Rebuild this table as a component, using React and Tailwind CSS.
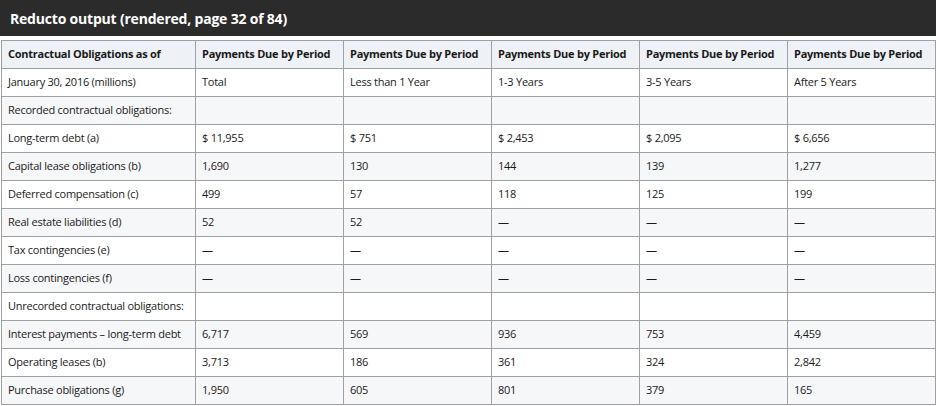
import React from 'react';

const head = [
  'Contractual Obligations as of',
  'Payments Due by Period',
  'Payments Due by Period',
  'Payments Due by Period',
  'Payments Due by Period',
  'Payments Due by Period',
];

const rows = [
  ['January 30, 2016 (millions)', 'Total', 'Less than 1 Year', '1-3 Years', '3-5 Years', 'After 5 Years'],
  ['Recorded contractual obligations:', '', '', '', '', ''],
  ['Long-term debt (a)', '$ 11,955', '$ 751', '$ 2,453', '$ 2,095', '$ 6,656'],
  ['Capital lease obligations (b)', '1,690', '130', '144', '139', '1,277'],
  ['Deferred compensation (c)', '499', '57', '118', '125', '199'],
  ['Real estate liabilities (d)', '52', '52', '—', '—', '—'],
  ['Tax contingencies (e)', '—', '—', '—', '—', '—'],
  ['Loss contingencies (f)', '—', '—', '—', '—', '—'],
  ['Unrecorded contractual obligations:', '', '', '', '', ''],
  ['Interest payments – long-term debt', '6,717', '569', '936', '753', '4,459'],
  ['Operating leases (b)', '3,713', '186', '361', '324', '2,842'],
  ['Purchase obligations (g)', '1,950', '605', '801', '379', '165'],
];

export default function App() {
  return (
    <div className="w-[936px] h-[406px] bg-white overflow-hidden" style={{ fontFamily: '"Open Sans", "Noto Sans", sans-serif' }}>
      <div className="h-[36px] bg-[#2b2b2b] flex items-center px-[10px]">
        <span className="text-white font-bold text-[14px] tracking-[-0.2px]">Reducto output (rendered, page 32 of 84)</span>
      </div>
      <table className="mt-[4px] ml-px w-[934px] table-fixed border-collapse text-[11px] tracking-[-0.25px] text-[#1a1a1a]">
        <colgroup>
          <col className="w-[194px]" />
          <col className="w-[148px]" />
          <col className="w-[148px]" />
          <col className="w-[148px]" />
          <col className="w-[148px]" />
          <col className="w-[148px]" />
        </colgroup>
        <thead>
          <tr className="bg-[#eef1f5]">
            {head.map((h, i) => (
              <th key={i} className="border border-[#a0a0a0] h-[28px] px-[6px] text-left font-bold whitespace-nowrap">{h}</th>
            ))}
          </tr>
        </thead>
        <tbody>
          {rows.map((r, ri) => (
            <tr key={ri} className={ri % 2 === 1 ? 'bg-[#f6f7f9]' : 'bg-white'}>
              {r.map((c, ci) => (
                <td key={ci} className="border border-[#a0a0a0] h-[28px] px-[6px] whitespace-nowrap">{c}</td>
              ))}
            </tr>
          ))}
        </tbody>
      </table>
    </div>
  );
}
